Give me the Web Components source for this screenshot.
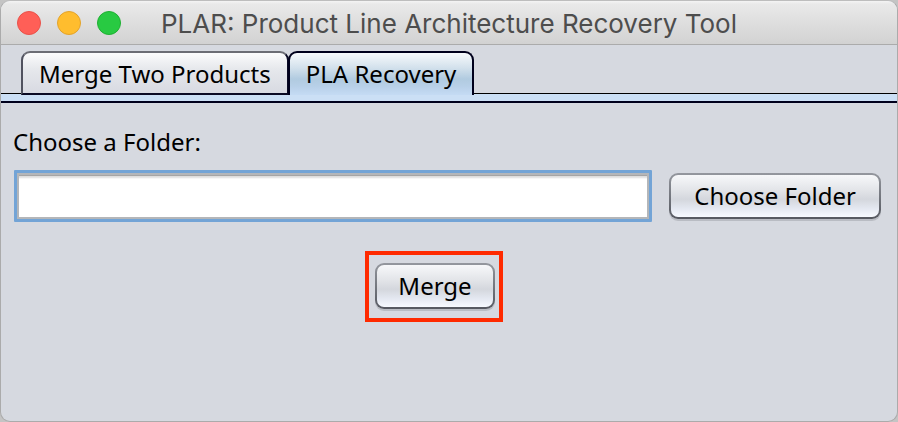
<!DOCTYPE html>
<html lang="en">
<head>
<meta charset="utf-8">
<title>PLAR: Product Line Architecture Recovery Tool</title>
<style>
html, body { height: 100%; margin: 0; }
body { background: #c4c4c4; font-family: "Noto Sans", "Open Sans", sans-serif; font-size: 24px; line-height: 32px; color: #000; }
</style>
</head>
<body>
<app-window heading="PLAR: Product Line Architecture Recovery Tool">
  <tab-strip>
    <tab-item>Merge Two Products</tab-item>
    <tab-item selected>PLA Recovery</tab-item>
  </tab-strip>
  <recovery-form></recovery-form>
</app-window>
<script>
class Base extends HTMLElement {
  connectedCallback() {
    if (!this.shadowRoot) this.attachShadow({ mode: "open" }).innerHTML = this.render();
  }
}

customElements.define("app-window", class extends Base {
  render() {
    return `<style>
      :host { display: flex; flex-direction: column; box-sizing: border-box; min-height: 100%; overflow: hidden;
        border: 1px solid #ababab; border-top-color: #bdbdbd; border-radius: 10px; background: #d6d9e0; }
      header { display: grid; grid-template-columns: 1fr auto 1fr; align-items: center; height: 43px;
        padding-left: 16px; padding-right: 16px; border-bottom: 1px solid #ababab;
        background: linear-gradient(#f4f4f4 0, #e9e9e9 3px, #d2d2d2 100%); }
      .lights { display: flex; gap: 16px; }
      .lights button { width: 24px; height: 24px; padding: 0; border: 1px solid var(--rim); border-radius: 50%; }
      .close { background: #ff5f57; --rim: #e9524a; }
      .min { background: #ffbd2e; --rim: #e3a32b; }
      .max { background: #28ca42; --rim: #1fb032; }
      h1 { margin: 0; font: 400 26px/32px Inter, sans-serif; color: #4d4d4d; white-space: nowrap; padding-top: 2px; }
    </style>
    <header>
      <div class="lights"><button class="close" aria-label="Close"></button><button class="min" aria-label="Minimize"></button><button class="max" aria-label="Zoom"></button></div>
      <h1>${this.getAttribute("heading")}</h1>
    </header>
    <slot></slot>`;
  }
});

customElements.define("tab-strip", class extends Base {
  render() {
    return `<style>
      :host { display: block; }
      nav { display: flex; padding: 6px 20px 0; border-bottom: 1px solid #000; height: 42px; }
      .rail { height: 7px; background: #cbdff5; border-bottom: 2px solid #00001c; }
    </style>
    <nav role="tablist"><slot></slot></nav><div class="rail"></div>`;
  }
});

customElements.define("tab-item", class extends Base {
  render() {
    const on = this.hasAttribute("selected");
    return `<style>
      :host { display: block; height: 44px; }
      :host([selected]) { margin-left: -1px; }
      button { position: relative; box-sizing: border-box; height: 44px; padding: 2px 16px 0; border: 2px solid #0a0a24;
        border-top-color: #6b6c74; border-left-color: #50525f; border-radius: 9px 9px 0 0; font: inherit; color: #000; white-space: nowrap;
        background: linear-gradient(#fbfbfc, #e6e8ec 40%, #d8dae2); }
      :host([selected]) button { border-color: #00001c; border-bottom: 0; padding: 0 16px;
        background: linear-gradient(#f7fafc, #d3e1ec 35%, #b1cbe0 62%, #b8d0e8 80%, #c5dbf4); }
    </style><button role="tab" aria-selected="${on}"><slot></slot></button>`;
  }
});

customElements.define("push-button", class extends Base {
  render() {
    return `<style>
      :host { display: block; }
      button { display: block; box-sizing: border-box; height: 46px; padding: 0 var(--inset, 23px); border: 2px solid transparent; border-radius: 9px;
        font: inherit; color: #000; white-space: nowrap; box-shadow: 0 2px 0 #b9bcc3;
        background: linear-gradient(#f7f8fa, #e3e5e9 35%, #d4d7dd 58%, #e4e8f1 80%, #f7faff) padding-box,
          linear-gradient(#94979e, #555860) border-box; }
    </style><button type="button"><slot></slot></button>`;
  }
});

customElements.define("recovery-form", class extends Base {
  render() {
    return `<style>
      :host { display: block; padding: 23px 16px 0 12px; }
      label { display: block; }
      .row { display: flex; align-items: center; gap: 17px; padding: 12px 0 0 1px; }
      input { flex: 1; min-width: 0; box-sizing: border-box; height: 52px; padding: 0 8px; border: 3px solid #73a4d6; border-radius: 1px; outline: 0;
        background: #fff; font: inherit; color: #000;
        box-shadow: inset 0 0 0 2px #b4b6b9, inset 0 3px 0 #a5a5a5, inset 0 5px 2px #ddd; }
      .action { display: flex; justify-content: center; padding: 29px 26px 0 0; }
      .mark { border: 4px solid #ff2a00; padding: 8px 4px 9px 6px; --inset: 21px; }
    </style>
    <label for="folder">Choose a Folder:</label>
    <div class="row"><input id="folder" type="text"><push-button>Choose Folder</push-button></div>
    <div class="action"><div class="mark"><push-button>Merge</push-button></div></div>`;
  }
});
</script>
</body>
</html>
